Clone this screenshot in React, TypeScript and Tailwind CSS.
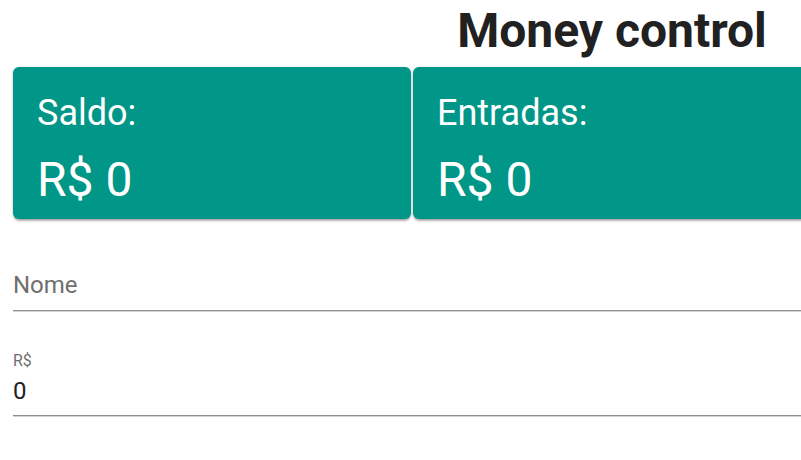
import React from "react";

type Summary = { label: string; value: number };

const summaries: Summary[] = [
  { label: "Saldo:", value: 0 },
  { label: "Entradas:", value: 0 },
  { label: "Saídas:", value: 0 },
];

function SummaryCard({ item }: { item: Summary }) {
  return (
    <div className="flex-1 h-[152px] rounded-md bg-[#009688] px-6 pt-6 text-white shadow-[0_3px_2px_-1px_rgba(0,0,0,0.2),0_1px_2px_0_rgba(0,0,0,0.14),0_1px_4px_0_rgba(0,0,0,0.12)]">
      <p className="w-fit text-[36px] leading-[44px]">{item.label}</p>
      <p className="mt-[17px] w-fit text-[48px] leading-[56px]">R$ {item.value}</p>
    </div>
  );
}

export default function App() {
  return (
    <div className="w-[801px] h-[460px] overflow-hidden bg-white font-['Roboto',sans-serif]">
      <div className="w-[1224px] px-[13px]">
        {/* Header */}
        <h1 className="pt-[3px] text-center text-[48px] font-bold leading-[56px] text-[#212121]">
          Money control
        </h1>

        {/* Cards */}
        <div className="mt-[8px] flex gap-[2px]">
          {summaries.map((s) => (
            <SummaryCard key={s.label} item={s} />
          ))}
        </div>

        {/* Form */}
        <form className="mt-[44px]">
          <div className="border-b border-[#8e8e8e] pt-[5px] pb-[8px] shadow-[0_1px_0_#d4d4d4]">
            <input
              placeholder="Nome"
              className="block w-full bg-transparent text-[24px] leading-[34px] text-[#212121] outline-none placeholder:text-[#6f6f6f]"
            />
          </div>

          <div className="mt-[41px]">
            <label className="block text-[16px] leading-[18px] text-[#6f6f6f]">R$</label>
            <div className="border-b border-[#8e8e8e] pt-[4px] pb-[7px] shadow-[0_1px_0_#d4d4d4]">
              <input
                defaultValue="0"
                className="block w-full bg-transparent text-[24px] leading-[34px] text-[#212121] outline-none"
              />
            </div>
          </div>
        </form>
      </div>
    </div>
  );
}
